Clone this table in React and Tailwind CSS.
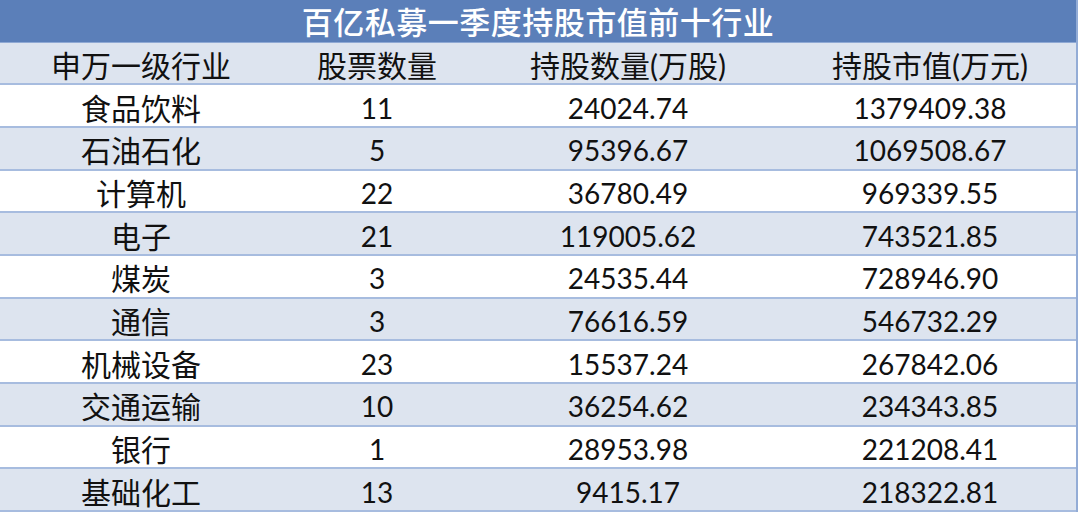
const rows = [
  ["食品饮料", "11", "24024.74", "1379409.38"],
  ["石油石化", "5", "95396.67", "1069508.67"],
  ["计算机", "22", "36780.49", "969339.55"],
  ["电子", "21", "119005.62", "743521.85"],
  ["煤炭", "3", "24535.44", "728946.90"],
  ["通信", "3", "76616.59", "546732.29"],
  ["机械设备", "23", "15537.24", "267842.06"],
  ["交通运输", "10", "36254.62", "234343.85"],
  ["银行", "1", "28953.98", "221208.41"],
  ["基础化工", "13", "9415.17", "218322.81"],
];

const cols = "grid grid-cols-[282px_190px_312px_292px]";

export default function App() {
  return (
    <div
      className="w-[1080px] h-[512px] overflow-hidden bg-white text-[#111]"
      style={{ fontFamily: "Lato, 'Noto Sans CJK SC', sans-serif" }}
    >
      <div className="w-[1078px] h-[512px] border-r-2 border-[#93acd6] grid grid-rows-12">
        {/* 标题 */}
        <div className="bg-[#5b7fb9] border-b border-[#8fa9d4] flex items-center justify-center pt-1">
          <span className="text-white text-[31px] leading-none font-medium tracking-[0.5px]">
            百亿私募一季度持股市值前十行业
          </span>
        </div>

        {/* 表头 */}
        <div className={`${cols} bg-[#dde4ef] border-b-2 border-[#a7bcdf] items-center pt-1 text-[30px] leading-none`}>
          <div className="text-center">申万一级行业</div>
          <div className="text-center">股票数量</div>
          <div className="text-center">持股数量(万股)</div>
          <div className="text-center">持股市值(万元)</div>
        </div>

        {rows.map((r, i) => (
          <div
            key={r[0]}
            className={`${cols} items-center pt-1 border-b-2 border-[#a7bcdf] leading-none ${
              i % 2 === 1 ? "bg-[#dde4ef]" : "bg-white"
            }`}
          >
            <div className="text-center text-[30px]">{r[0]}</div>
            <div className="text-center text-[28px]">{r[1]}</div>
            <div className="text-center text-[28px]">{r[2]}</div>
            <div className="text-center text-[28px]">{r[3]}</div>
          </div>
        ))}
      </div>
    </div>
  );
}
